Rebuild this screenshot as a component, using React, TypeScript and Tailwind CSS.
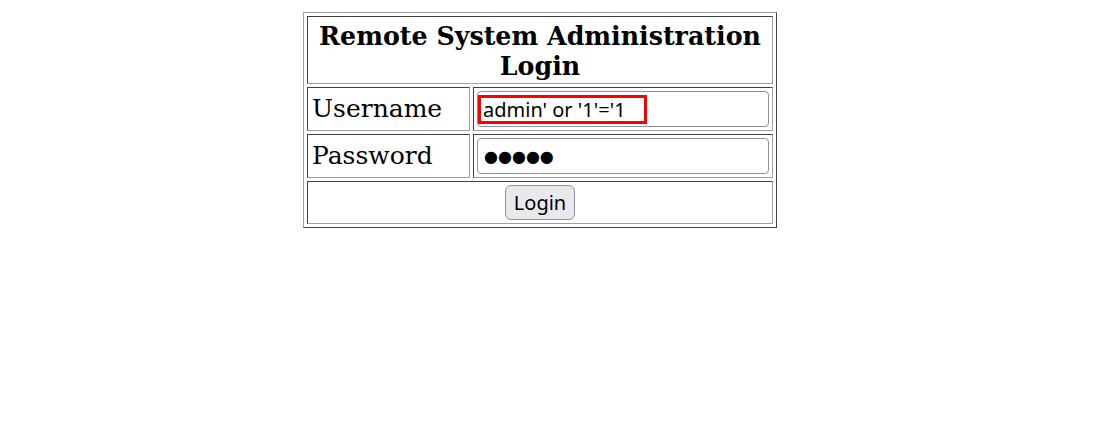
export default function App() {
  const serif = { fontFamily: '"DejaVu Serif", serif' };
  const sans = { fontFamily: '"Noto Sans", "DejaVu Sans", sans-serif' };
  const cell = 'p-[1px] border border-t-[#404040] border-l-[#404040] border-r-[#a0a0a0] border-b-[#a0a0a0]';
  return (
    <div className="w-[1080px] pt-[12px] bg-white min-h-[439px]" style={serif}>
      <table className="mx-auto border-separate border-spacing-[3px] border border-t-[#a0a0a0] border-l-[#a0a0a0] border-r-[#404040] border-b-[#404040] text-black">
        <tbody>
          <tr>
            <td colSpan={2} className={`${cell} text-center text-[25.3px] leading-[30px] pt-[4px] pb-[2px] font-bold`}>
              Remote System Administration
              <br />
              Login
            </td>
          </tr>
          <tr>
            <td className={`${cell} w-[163px] pl-[4px] text-[25px]`}>Username</td>
            <td className={cell}>
              <div className="relative m-[2px] w-[292px]">
                <input
                  type="text"
                  readOnly
                  value="admin' or '1'='1"
                  className="block w-[292px] h-[36px] px-[5px] rounded-[4px] border border-[#8f8f9d] text-[20px] text-black bg-white outline-none"
                  style={sans}
                />
                <div className="absolute left-[1px] top-[4px] w-[169px] h-[29px] border-[3px] border-[#ff0000] pointer-events-none" />
              </div>
            </td>
          </tr>
          <tr>
            <td className={`${cell} pl-[4px] text-[25px]`}>Password</td>
            <td className={cell}>
              <input
                type="text"
                readOnly
                value="●●●●●"
                className="block m-[2px] w-[292px] h-[36px] px-[6px] rounded-[4px] border border-[#8f8f9d] text-[16px] text-black bg-white outline-none"
                style={{ fontFamily: '"DejaVu Sans", sans-serif' }}
              />
            </td>
          </tr>
          <tr>
            <td colSpan={2} className={`${cell} text-center`}>
              <button
                type="button"
                className="my-[2px] w-[70px] h-[35px] rounded-[6px] border border-[#8f8f9d] bg-[#e9e9ed] text-[20px] text-black"
                style={sans}
              >
                Login
              </button>
            </td>
          </tr>
        </tbody>
      </table>
    </div>
  );
}
